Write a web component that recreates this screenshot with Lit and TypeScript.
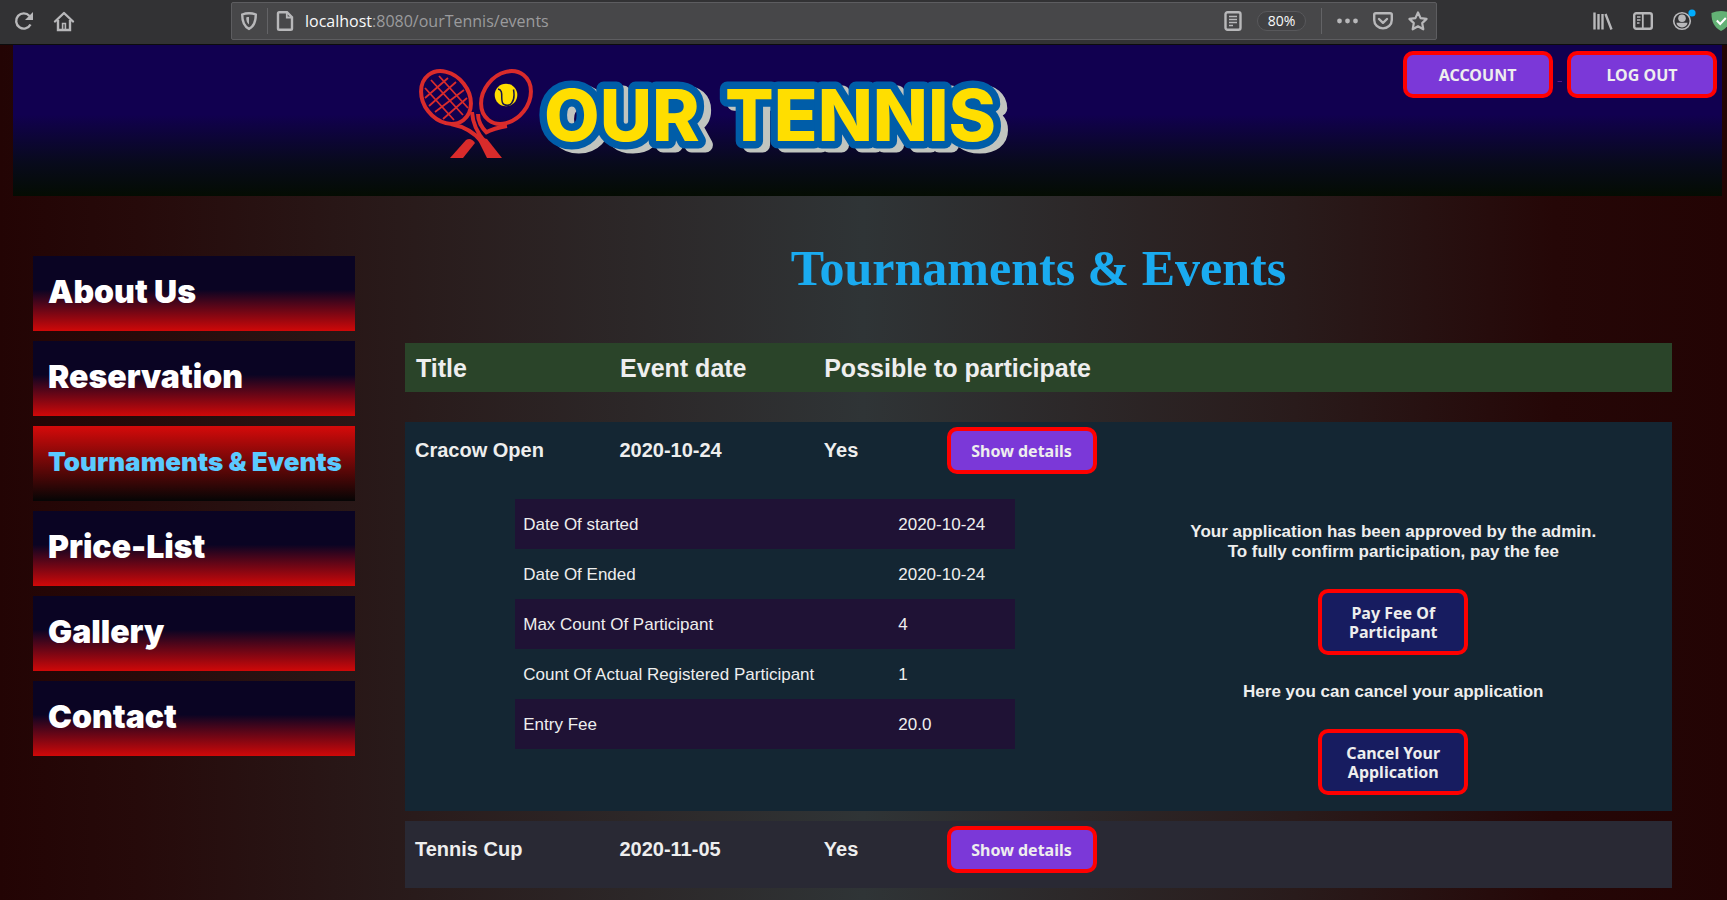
import { LitElement, html, css } from "lit";
import { customElement } from "lit/decorators.js";
import { classMap } from "lit/directives/class-map.js";

interface TennisEvent {
  title: string;
  date: string;
  open: string;
  facts?: [string, string][];
}

const NAV = ["About Us", "Reservation", "Tournaments & Events", "Price-List", "Gallery", "Contact"];
const ACTIVE = "Tournaments & Events";

const EVENTS: TennisEvent[] = [
  {
    title: "Cracow Open",
    date: "2020-10-24",
    open: "Yes",
    facts: [
      ["Date Of started", "2020-10-24"],
      ["Date Of Ended", "2020-10-24"],
      ["Max Count Of Participant", "4"],
      ["Count Of Actual Registered Participant", "1"],
      ["Entry Fee", "20.0"],
    ],
  },
  { title: "Tennis Cup", date: "2020-11-05", open: "Yes" },
];

@customElement("browser-bar")
class BrowserBar extends LitElement {
  static styles = css`
    :host {
      display: flex;
      align-items: center;
      height: 45px;
      box-sizing: border-box;
      padding: 2px 0 5px 14px;
      background: #323234;
      border-bottom: 1px solid #0c0c0d;
      font-family: "Open Sans", "Noto Sans", sans-serif;
      overflow: hidden;
    }
    button {
      display: flex;
      flex: none;
      padding: 0;
      border: 0;
      background: none;
      color: #b8b8ba;
    }
    svg {
      display: block;
      overflow: visible;
      fill: none;
      stroke: currentColor;
      stroke-width: 2.4;
    }
    .left,
    .right,
    .actions {
      display: flex;
      align-items: center;
      flex: none;
    }
    .left {
      gap: 20px;
      width: 217px;
    }
    .right {
      gap: 20px;
      width: 134px;
      margin-left: 156px;
    }
    .url {
      display: flex;
      flex: 1;
      align-items: center;
      height: 38px;
      box-sizing: border-box;
      padding: 0 8px;
      border: 1px solid #5d5d60;
      border-radius: 2px;
      background: #474749;
    }
    .rule {
      width: 1px;
      height: 26px;
      background: #636366;
    }
    .page {
      margin: 0 11px 0 8px;
    }
    .shield {
      margin-right: 9px;
    }
    .address {
      flex: 1;
      padding-top: 1px;
      color: #9b9b9d;
      font-size: 16px;
      text-decoration: none;
    }
    .host {
      color: #f9f9fa;
    }
    .actions {
      gap: 15px;
    }
    .zoom {
      width: 49px;
      height: 20px;
      justify-content: center;
      align-items: center;
      border: 1px solid #58585b;
      border-radius: 10px;
      background: #414143;
      color: #f9f9fa;
      font: 14px "Open Sans", sans-serif;
    }
  `;

  render() {
    return html`
      <div class="left">
        <button aria-label="Reload">
          <svg width="20" height="20" viewBox="0 0 20 20">
            <path d="M16.5 13.5A7.6 7.6 0 1 1 15.5 5" />
            <path d="M19 1v8h-8z" fill="currentColor" stroke="none" />
          </svg>
        </button>
        <button aria-label="Home">
          <svg width="20" height="20" viewBox="0 0 20 20">
            <path d="M1 10.5 10 2l9 8.5" stroke-linecap="round" stroke-linejoin="round" />
            <path d="M4 9v10h12V9" />
            <path d="M8.6 18v-5.5h2.8V18" stroke-width="1.6" />
          </svg>
        </button>
      </div>
      <div class="url">
        <button class="shield" aria-label="Tracking protection">
          <svg width="18" height="18" viewBox="0 0 18 18">
            <path d="M9 1.2c2.5 0 4.8.5 6.8 1.3 0 6.5-1 11.5-6.8 14.3C3.2 14 2.2 9 2.2 2.5 4.2 1.7 6.5 1.2 9 1.2z" />
            <path d="M9 5c-1 0-2 .1-2.8.4.1 3 .8 5.6 2.8 7.2z" fill="currentColor" stroke="none" />
          </svg>
        </button>
        <span class="rule"></span>
        <button class="page" aria-label="Site information">
          <svg width="18" height="20" viewBox="0 0 18 20">
            <path d="M2 2.5Q2 1.2 3.3 1.2H11L16 6.2V17.5Q16 18.8 14.7 18.8H3.3Q2 18.8 2 17.5Z" />
            <path d="M10.8 1.5V6.5H16" stroke-width="1.8" />
          </svg>
        </button>
        <a class="address" href="#"><span class="host">localhost</span>:8080/ourTennis/events</a>
        <div class="actions">
          <button aria-label="Reader view">
            <svg width="18" height="20" viewBox="0 0 18 20">
              <rect x="1.5" y="1.2" width="15" height="17.6" rx="2" />
              <path d="M5 5.5h8M5 8.5h8M5 11.5h8M5 14.5h4" stroke-width="1.5" />
            </svg>
          </button>
          <button class="zoom">80%</button>
          <span class="rule"></span>
          <button aria-label="Page actions">
            <svg width="21" height="20" viewBox="0 0 21 20">
              <g fill="currentColor" stroke="none">
                <circle cx="2.5" cy="10" r="2.4" /><circle cx="10.5" cy="10" r="2.4" /><circle cx="18.5" cy="10" r="2.4" />
              </g>
            </svg>
          </button>
          <button aria-label="Save to Pocket">
            <svg width="20" height="20" viewBox="0 0 20 20">
              <path d="M1.2 3.8Q1.2 2.2 2.8 2.2H17.2Q18.8 2.2 18.8 3.8V9a8.8 8.4 0 0 1-17.6 0Z" />
              <path d="M6 8l4 3.8L14 8" stroke-linecap="round" stroke-linejoin="round" />
            </svg>
          </button>
          <button aria-label="Bookmark">
            <svg width="20" height="20" viewBox="0 0 20 20">
              <path d="M10 1.500l2.6 5.600 6 .8-4.400 4.200 1.100 6.200L10 15.300l-5.300 3 1.100-6.200L1.400 7.900l6-.8z" stroke-width="2.200" stroke-linejoin="round" />
            </svg>
          </button>
        </div>
      </div>
      <div class="right">
        <button aria-label="Library">
          <svg width="20" height="20" viewBox="0 0 20 20">
            <path d="M1.5 1.5v17M5.5 3v15.500M9.500 3v15.500M12.500 3l6 15.500" />
          </svg>
        </button>
        <button aria-label="Sidebars">
          <svg width="20" height="20" viewBox="0 0 20 20">
            <rect x="1.2" y="2.2" width="17.6" height="15.6" rx="2" />
            <path d="M9.8 2v16" stroke-width="1.8" />
            <path d="M4 6h3.500M4 9h3.500M4 12h2.500" stroke-width="1.5" />
          </svg>
        </button>
        <button aria-label="Account">
          <svg width="18" height="20" viewBox="0 0 18 20">
            <circle cx="9" cy="10" r="8.300" stroke-width="1.600" />
            <circle cx="9" cy="7.200" r="3.800" fill="currentColor" stroke="none" />
            <path d="M3.500 11.800h11a5.500 4.600 0 0 1-11 0z" fill="currentColor" stroke="none" />
            <circle cx="19" cy="2" r="3.600" fill="#00adff" stroke="none" />
          </svg>
        </button>
        <button aria-label="Protection extension">
          <svg width="20" height="20" viewBox="0 0 20 20">
            <path d="M10 0c3 .1 6.500.8 9.500 2 .2 8.500-2.500 14.500-9.500 18C3 16.500.3 10.500.5 2 3.500.8 7 .1 10 0z" fill="#63b175" stroke="none" />
            <path d="M5.800 9.500l3.400 3.500 5.600-6" stroke="#fff" stroke-width="2" />
          </svg>
        </button>
      </div>
    `;
  }
}

@customElement("tennis-logo")
class TennisLogo extends LitElement {
  static styles = css`
    :host {
      display: block;
    }
    svg {
      display: block;
      overflow: visible;
    }
    .name {
      filter: drop-shadow(7px 4px 0 #c1c5bf);
    }
    .word {
      font-family: "Inter", sans-serif;
      font-weight: 800;
      font-size: 72px;
      fill: #ffde00;
      stroke: #005da8;
      stroke-width: 15px;
      stroke-linejoin: round;
      paint-order: stroke;
    }
  `;

  render() {
    return html`
      <svg width="590" height="92" viewBox="0 0 590 92" role="img" aria-label="Our Tennis">
        <g fill="none" stroke="#d92b2b">
          <path
            d="M21 8L50 40M13 12L45 47M7 20L36 52M30 10L7 30M38 14L11 38M46 22L17 44M49 30L25 51"
            stroke-width="1.800"
          />
          <ellipse cx="28" cy="29.500" rx="22.500" ry="28.500" transform="rotate(-38 28 29.500)" stroke-width="4" />
          <ellipse cx="88" cy="29.500" rx="22.500" ry="28.500" transform="rotate(38 88 29.500)" stroke-width="4" />
          <path d="M33 56Q53 60 64 74M54 44Q55 60 67 74M60 46Q60 56 69 65M89 58Q76 60 67 65" stroke-width="4" />
        </g>
        <path d="M58 68l11 3 15 19H69z" fill="#d92b2b" />
        <path d="M48 72q5-3 9 3L45 90H32z" fill="#d92b2b" />
        <circle cx="88" cy="27" r="11.300" fill="#ffde00" />
        <path d="M80 21c7 1 1 13 6 15.500s12-1 9.500-15" fill="none" stroke="#15154a" stroke-width="1.500" />
        <g class="name">
          <text class="word" x="126" y="73">OUR</text>
          <text class="word" x="307" y="73">TENNIS</text>
        </g>
      </svg>
    `;
  }
}

@customElement("app-root")
class AppRoot extends LitElement {
  static styles = css`
    :host {
      display: block;
      min-height: 100vh;
      background: linear-gradient(90deg, #230404 0%, #260a0a 8%, #291b1b 24%, #2f3436 50%, #291b1b 75%, #250707 90%, #230404 100%);
      color: #eee;
      font-family: "Liberation Sans", Arial, sans-serif;
    }
    .banner {
      display: grid;
      grid-template-columns: 405px 1fr auto;
      align-items: start;
      height: 151px;
      box-sizing: border-box;
      margin: 0 5px 0 13px;
      padding: 6px 5px 0 0;
      background: linear-gradient(#110050 0%, #110050 46%, #080a1c 78%, #040c02 100%);
    }
    .logo {
      grid-column: 2;
      padding-top: 17px;
    }
    .session {
      display: flex;
      align-items: center;
      gap: 5px;
    }
    .join {
      color: #551a8b;
      font-size: 16px;
      text-decoration: underline;
      white-space: pre;
    }
    .btn {
      width: 150px;
      min-height: 47px;
      box-sizing: border-box;
      padding: 11px 16px 9px;
      border: 4px solid #f00;
      border-radius: 10px;
      background: #7b38d8;
      color: #eee;
      font: bold 16px/19px "Noto Sans", sans-serif;
    }
    .btn.dark {
      min-height: 66px;
      background: #171c60;
    }
    .layout {
      display: grid;
      grid-template-columns: 322px minmax(0, 1fr);
      gap: 50px;
      padding: 0 55px 12px 33px;
    }
    .nav {
      display: flex;
      flex-direction: column;
      gap: 10px;
      padding-top: 60px;
    }
    .nav a {
      display: flex;
      align-items: center;
      height: 75px;
      box-sizing: border-box;
      padding: 0 0 5px 15px;
      background: linear-gradient(#0a0423 0%, #0a0423 45%, #d00808 100%);
      color: #fff;
      font: 900 32px "Inter", "Arial Black", sans-serif;
      text-decoration: none;
      white-space: nowrap;
    }
    .nav a.active {
      background: linear-gradient(#d60a0a 0%, #050505 100%);
      color: #5bcaff;
      font-size: 26px;
    }
    h1 {
      margin: 0;
      padding: 43px 0 45px;
      color: #1aabf0;
      font: bold 50px/59px "Liberation Serif", "Times New Roman", serif;
      text-align: center;
    }
    .events,
    .events > thead,
    .events > tbody {
      display: block;
    }
    .row {
      display: grid;
      grid-template-columns: 10fr 10fr 6fr 35fr;
      padding: 0 11px;
    }
    .row > td,
    .row > th {
      padding: 0;
      text-align: left;
      font-weight: bold;
      white-space: nowrap;
    }
    .row > .wide {
      grid-column: span 2;
    }
    .head {
      margin-bottom: 30px;
      padding-top: 2px;
      background: #2a4429;
      font-size: 25px;
      line-height: 47px;
    }
    .event {
      margin-bottom: 10px;
      background: #292934;
      font-size: 20px;
      line-height: 56px;
    }
    .event.open {
      background: #142633;
    }
    .event:last-child {
      margin-bottom: 0;
    }
    .event .row {
      min-height: 67px;
      padding: 0 10px;
    }
    .event .row .btn {
      display: block;
      margin-top: 5px;
    }
    .detail {
      display: grid;
      grid-template-columns: 14fr 11fr;
      padding: 10px 0 15px;
    }
    .detail > td {
      padding: 0;
    }
    .detail > .info {
      padding-left: 11px;
    }
    .facts {
      width: 500px;
      margin: 0 auto;
      border-collapse: collapse;
      font-size: 17px;
      line-height: 20px;
    }
    .facts th,
    .facts td {
      height: 50px;
      box-sizing: border-box;
      padding: 2px 8px 0;
      text-align: left;
      font-weight: normal;
    }
    .facts td {
      width: 125px;
    }
    .facts tr:nth-child(odd) {
      background: #1f1235;
    }
    .apply {
      display: flex;
      flex-direction: column;
      align-items: center;
      gap: 27px;
      padding: 23px 0 1px;
      font-size: 17px;
      font-weight: bold;
      line-height: 20px;
      text-align: center;
    }
    .apply p {
      margin: 0;
    }
  `;

  private renderDetail(e: TennisEvent) {
    return html`
      <tr class="detail">
        <td class="info">
          <table class="facts">
            <tbody>
              ${e.facts!.map(([k, v]) => html`<tr><th scope="row">${k}</th><td>${v}</td></tr>`)}
            </tbody>
          </table>
        </td>
        <td>
          <div class="apply">
            <p>Your application has been approved by the admin.<br />To fully confirm participation, pay the fee</p>
            <button class="btn dark">Pay Fee Of Participant</button>
            <p>Here you can cancel your application</p>
            <button class="btn dark">Cancel Your Application</button>
          </div>
        </td>
      </tr>
    `;
  }

  render() {
    return html`
      <browser-bar></browser-bar>
      <header class="banner">
        <tennis-logo class="logo"></tennis-logo>
        <div class="session">
          <button class="btn">ACCOUNT</button>
          <span class="join">&nbsp;</span>
          <button class="btn">LOG OUT</button>
        </div>
      </header>
      <div class="layout">
        <nav class="nav">
          ${NAV.map((n) => html`<a href="#" class=${classMap({ active: n === ACTIVE })}>${n}</a>`)}
        </nav>
        <main>
          <h1>Tournaments &amp; Events</h1>
          <table class="events">
            <thead>
              <tr class="row head">
                <th scope="col">Title</th>
                <th scope="col">Event date</th>
                <th scope="col" class="wide" colspan="2">Possible to participate</th>
              </tr>
            </thead>
            ${EVENTS.map(
              (e) => html`
                <tbody class=${classMap({ event: true, open: !!e.facts })}>
                  <tr class="row">
                    <td>${e.title}</td>
                    <td>${e.date}</td>
                    <td>${e.open}</td>
                    <td><button class="btn">Show details</button></td>
                  </tr>
                  ${e.facts ? this.renderDetail(e) : ""}
                </tbody>
              `
            )}
          </table>
        </main>
      </div>
    `;
  }
}
